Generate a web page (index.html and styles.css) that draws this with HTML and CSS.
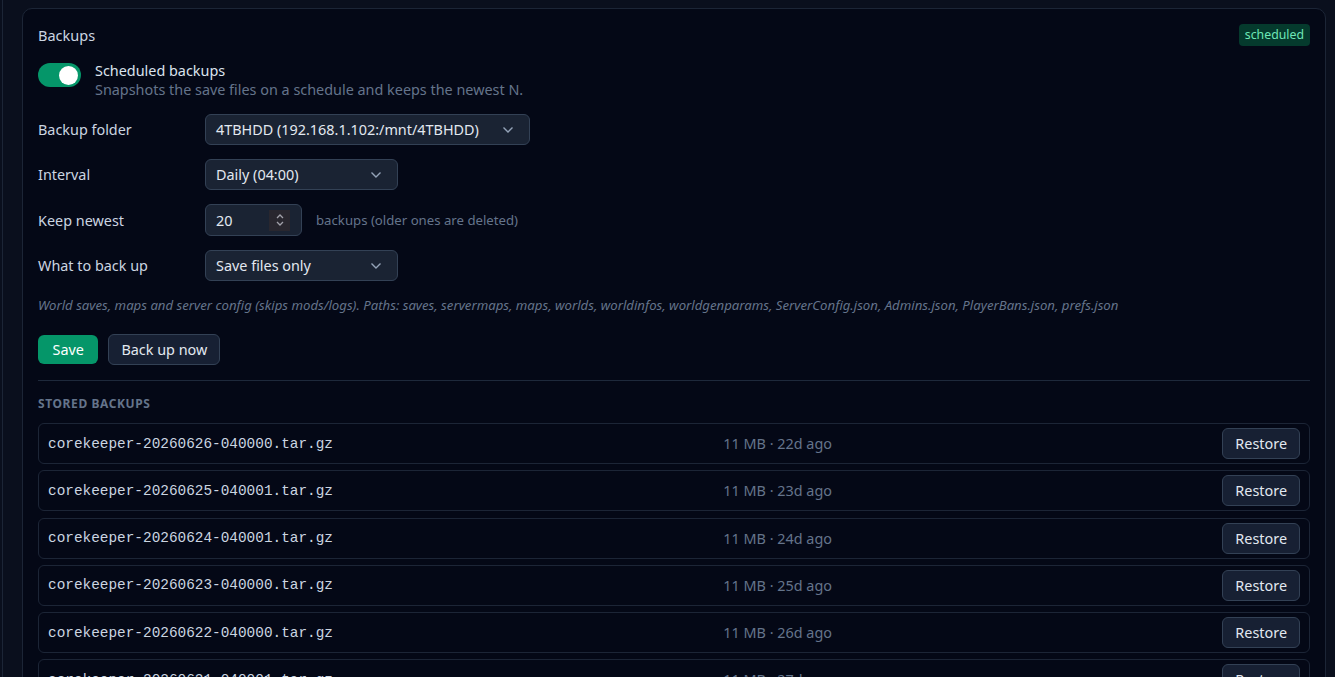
FILE: index.html
```html
<!DOCTYPE html>
<html lang="en">
<head>
  <meta charset="UTF-8" />
  <meta name="viewport" content="width=device-width, initial-scale=1.0"/>
  <title>Backups</title>
  <link rel="stylesheet" href="styles.css">
</head>
<body>
  <main class="panel">
    <section class="card">
      <div class="card-head">
        <h2>Backups</h2>
        <span class="badge">scheduled</span>
      </div>

      <div class="toggle-row">
        <span class="toggle"><span class="knob"></span></span>
        <div>
          <div class="toggle-title">Scheduled backups</div>
          <div class="toggle-desc">Snapshots the save files on a schedule and keeps the newest N.</div>
        </div>
      </div>

      <div class="form">
        <label>Backup folder</label>
        <div class="select wide">
          <span>4TBHDD (192.168.1.102:/mnt/4TBHDD)</span>
          <svg class="chev" width="12" height="8" viewBox="0 0 12 8"><path d="M1.5 1.5 6 6l4.5-4.5" fill="none" stroke="#94a3b8" stroke-width="1.4"/></svg>
        </div>

        <label>Interval</label>
        <div class="select">
          <span>Daily (04:00)</span>
          <svg class="chev" width="12" height="8" viewBox="0 0 12 8"><path d="M1.5 1.5 6 6l4.5-4.5" fill="none" stroke="#94a3b8" stroke-width="1.4"/></svg>
        </div>

        <label>Keep newest</label>
        <div class="keep">
          <div class="number">
            <span>20</span>
            <span class="spin">
              <svg width="10" height="16" viewBox="0 0 10 16"><path d="M2 6 5 3l3 3M2 10l3 3 3-3" fill="none" stroke="#a1a1aa" stroke-width="1.3"/></svg>
            </span>
          </div>
          <span class="hint">backups (older ones are deleted)</span>
        </div>

        <label>What to back up</label>
        <div class="select">
          <span>Save files only</span>
          <svg class="chev" width="12" height="8" viewBox="0 0 12 8"><path d="M1.5 1.5 6 6l4.5-4.5" fill="none" stroke="#94a3b8" stroke-width="1.4"/></svg>
        </div>
      </div>

      <p class="note">World saves, maps and server config (skips mods/logs). Paths: saves, servermaps, maps, worlds, worldinfos, worldgenparams, ServerConfig.json, Admins.json, PlayerBans.json, prefs.json</p>

      <div class="actions">
        <button class="btn primary">Save</button>
        <button class="btn">Back up now</button>
      </div>

      <hr>

      <h3>Stored backups</h3>
      <ul class="list">
        <li><span class="file">corekeeper-20260626-040000.tar.gz</span><span class="meta">11 MB · 22d ago</span><button class="btn">Restore</button></li>
        <li><span class="file">corekeeper-20260625-040001.tar.gz</span><span class="meta">11 MB · 23d ago</span><button class="btn">Restore</button></li>
        <li><span class="file">corekeeper-20260624-040001.tar.gz</span><span class="meta">11 MB · 24d ago</span><button class="btn">Restore</button></li>
        <li><span class="file">corekeeper-20260623-040000.tar.gz</span><span class="meta">11 MB · 25d ago</span><button class="btn">Restore</button></li>
        <li><span class="file">corekeeper-20260622-040000.tar.gz</span><span class="meta">11 MB · 26d ago</span><button class="btn">Restore</button></li>
        <li><span class="file">corekeeper-20260621-040001.tar.gz</span><span class="meta">11 MB · 27d ago</span><button class="btn">Restore</button></li>
      </ul>
    </section>
  </main>
</body>
</html>
```

FILE: styles.css
```css
html, body {
  margin: 0;
  height: 100%;
  overflow: hidden;
}
body {
  background: #0a0f1d;
  color: #cbd5e1;
  font-family: 'Noto Sans', 'Open Sans', sans-serif;
  font-size: 14.4px;
}
.panel {
  margin-left: 2px;
  border-left: 1px solid #1c2536;
  padding: 8px 9px 0 19px;
  min-height: 100%;
  box-sizing: border-box;
}
.card {
  background: #040816;
  border: 1px solid #1c2536;
  border-radius: 10px;
  padding: 15px;
}
.card-head {
  display: flex;
  justify-content: space-between;
  align-items: center;
  height: 22px;
}
h2 {
  margin: 0;
  font-size: 14.5px;
  font-weight: 400;
  color: #cbd5e1;
}
.badge {
  background: #053a2d;
  color: #6ee7b7;
  font-size: 12.3px;
  line-height: 22px;
  padding: 0 6px;
  border-radius: 4px;
}
.toggle-row {
  display: flex;
  gap: 14px;
  margin-top: 15px;
}
.toggle {
  width: 43px;
  height: 24px;
  margin-top: 2px;
  border-radius: 12px;
  background: #059669;
  display: flex;
  align-items: center;
  justify-content: flex-end;
  padding: 0 3px;
  box-sizing: border-box;
  flex-shrink: 0;
}
.knob {
  width: 19px;
  height: 19px;
  border-radius: 50%;
  background: #fff;
}
.toggle-title {
  line-height: 19px;
  color: #dbe3ee;
}
.toggle-desc {
  line-height: 19px;
  color: #64748b;
}
.form {
  display: grid;
  grid-template-columns: 167px auto;
  row-gap: 14px;
  align-items: center;
  justify-items: start;
  margin-top: 15px;
}
.form label {
  color: #cbd5e1;
}
.select {
  display: flex;
  align-items: center;
  justify-content: space-between;
  width: 193px;
  height: 31px;
  box-sizing: border-box;
  padding: 0 15px 0 10px;
  background: #1a2333;
  border: 1px solid #334155;
  border-radius: 6px;
  color: #e2e8f0;
}
.select.wide {
  width: 325px;
}
.keep {
  display: flex;
  align-items: center;
  gap: 14px;
}
.number {
  display: flex;
  align-items: center;
  justify-content: space-between;
  width: 97px;
  height: 32px;
  box-sizing: border-box;
  padding: 0 11px 0 10px;
  background: #1a2333;
  border: 1px solid #334155;
  border-radius: 6px;
  color: #e2e8f0;
}
.spin {
  display: flex;
  align-items: center;
  justify-content: center;
  width: 21px;
  height: 21px;
  background: #29272f;
}
.hint {
  font-size: 13.2px;
  color: #64748b;
}
.note {
  margin: 15px 0 0;
  font-size: 13.2px;
  line-height: 18px;
  font-style: italic;
  color: #64748b;
}
.actions {
  display: flex;
  gap: 10px;
  align-items: center;
  margin-top: 20px;
}
.btn {
  font-family: inherit;
  font-size: 14.4px;
  height: 31px;
  padding: 0 12px;
  background: #172033;
  border: 1px solid #334155;
  border-radius: 6px;
  color: #e2e8f0;
}
.btn.primary {
  height: 29px;
  padding: 0 14.5px;
  background: #059669;
  border: none;
  color: #fff;
}
hr {
  border: none;
  border-top: 1px solid #1e293b;
  margin: 15px 0 0;
}
h3 {
  margin: 15px 0 0;
  font-size: 12px;
  line-height: 16px;
  font-weight: 700;
  letter-spacing: 0.6px;
  text-transform: uppercase;
  color: #64748b;
}
.list {
  list-style: none;
  margin: 11px 0 0;
  padding: 0;
  display: flex;
  flex-direction: column;
  gap: 6.25px;
}
.list li {
  display: grid;
  grid-template-columns: minmax(0, 1fr) 499px auto;
  align-items: center;
  height: 41px;
  box-sizing: border-box;
  padding: 4px 9px;
  border: 1px solid #1c2536;
  border-radius: 6px;
}
.file {
  font-family: 'Liberation Mono', monospace;
  font-size: 14.4px;
  color: #cbd5e1;
}
.meta {
  color: #64748b;
}
.list .btn {
  height: 31px;
  padding: 0 12px;
}
```
